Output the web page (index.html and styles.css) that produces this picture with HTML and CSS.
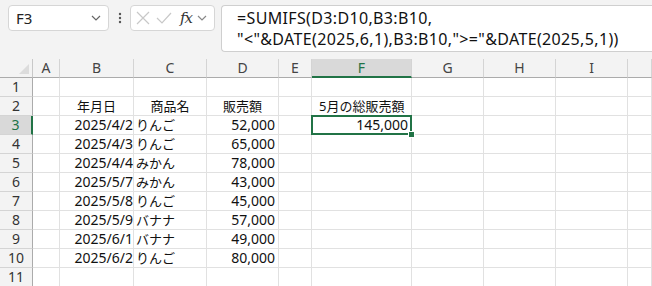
FILE: index.html
```html
<!DOCTYPE html>
<html lang="ja">
<head>
    <meta charset="UTF-8">
    <title>SUMIFS</title>
    <link rel="stylesheet" href="styles.css">
</head>
<body>
    <!-- 数式バー -->
    <div class="formula-area">
        <div class="name-box">
            <span>F3</span>
            <svg class="chev" width="12" height="8" viewBox="0 0 12 8"><path d="M2 2 L6 6 L10 2" fill="none" stroke="#666" stroke-width="1.2"/></svg>
        </div>
        <div class="dots">
            <svg width="4" height="14" viewBox="0 0 4 14"><circle cx="2" cy="3" r="1.2" fill="#555"/><circle cx="2" cy="7" r="1.2" fill="#555"/><circle cx="2" cy="11" r="1.2" fill="#555"/></svg>
        </div>
        <div class="fx-box">
            <svg width="16" height="16" viewBox="0 0 16 16"><path d="M2 2 L14 14 M14 2 L2 14" stroke="#c8c8c8" stroke-width="1.2"/></svg>
            <svg width="18" height="16" viewBox="0 0 18 16"><path d="M2 8 L7 13 L16 3" fill="none" stroke="#c8c8c8" stroke-width="1.2"/></svg>
            <span class="fx">fx</span>
            <svg class="chev" width="12" height="8" viewBox="0 0 12 8"><path d="M2 2 L6 6 L10 2" fill="none" stroke="#888" stroke-width="1.2"/></svg>
        </div>
        <div class="formula">
            <div>=SUMIFS(D3:D10,B3:B10,</div>
            <div>"&lt;"&amp;DATE(2025,6,1),B3:B10,"&gt;="&amp;DATE(2025,5,1))</div>
        </div>
    </div>

    <!-- シート -->
    <div class="sheet">
        <div class="corner"></div>
        <div class="col-head">A</div>
        <div class="col-head">B</div>
        <div class="col-head">C</div>
        <div class="col-head">D</div>
        <div class="col-head">E</div>
        <div class="col-head sel">F</div>
        <div class="col-head">G</div>
        <div class="col-head">H</div>
        <div class="col-head">I</div>
        <div class="col-head"></div>

        <div class="row-head">1</div>
        <div class="cell"></div><div class="cell"></div><div class="cell"></div><div class="cell"></div><div class="cell"></div><div class="cell"></div><div class="cell"></div><div class="cell"></div><div class="cell"></div><div class="cell"></div>

        <div class="row-head">2</div>
        <div class="cell"></div>
        <div class="cell ja center">年月日</div>
        <div class="cell ja center">商品名</div>
        <div class="cell ja center">販売額</div>
        <div class="cell"></div>
        <div class="cell ja label">5月の総販売額</div>
        <div class="cell"></div><div class="cell"></div><div class="cell"></div><div class="cell"></div>

        <div class="row-head sel">3</div>
        <div class="cell"></div>
        <div class="cell date">2025/4/2</div>
        <div class="cell ja">りんご</div>
        <div class="cell num">52,000</div>
        <div class="cell"></div>
        <div class="cell num active">145,000</div>
        <div class="cell"></div><div class="cell"></div><div class="cell"></div><div class="cell"></div>

        <div class="row-head">4</div>
        <div class="cell"></div>
        <div class="cell date">2025/4/3</div>
        <div class="cell ja">りんご</div>
        <div class="cell num">65,000</div>
        <div class="cell"></div><div class="cell"></div><div class="cell"></div><div class="cell"></div><div class="cell"></div><div class="cell"></div>

        <div class="row-head">5</div>
        <div class="cell"></div>
        <div class="cell date">2025/4/4</div>
        <div class="cell ja">みかん</div>
        <div class="cell num">78,000</div>
        <div class="cell"></div><div class="cell"></div><div class="cell"></div><div class="cell"></div><div class="cell"></div><div class="cell"></div>

        <div class="row-head">6</div>
        <div class="cell"></div>
        <div class="cell date">2025/5/7</div>
        <div class="cell ja">みかん</div>
        <div class="cell num">43,000</div>
        <div class="cell"></div><div class="cell"></div><div class="cell"></div><div class="cell"></div><div class="cell"></div><div class="cell"></div>

        <div class="row-head">7</div>
        <div class="cell"></div>
        <div class="cell date">2025/5/8</div>
        <div class="cell ja">りんご</div>
        <div class="cell num">45,000</div>
        <div class="cell"></div><div class="cell"></div><div class="cell"></div><div class="cell"></div><div class="cell"></div><div class="cell"></div>

        <div class="row-head">8</div>
        <div class="cell"></div>
        <div class="cell date">2025/5/9</div>
        <div class="cell ja">バナナ</div>
        <div class="cell num">57,000</div>
        <div class="cell"></div><div class="cell"></div><div class="cell"></div><div class="cell"></div><div class="cell"></div><div class="cell"></div>

        <div class="row-head">9</div>
        <div class="cell"></div>
        <div class="cell date">2025/6/1</div>
        <div class="cell ja">バナナ</div>
        <div class="cell num">49,000</div>
        <div class="cell"></div><div class="cell"></div><div class="cell"></div><div class="cell"></div><div class="cell"></div><div class="cell"></div>

        <div class="row-head">10</div>
        <div class="cell"></div>
        <div class="cell date">2025/6/2</div>
        <div class="cell ja">りんご</div>
        <div class="cell num">80,000</div>
        <div class="cell"></div><div class="cell"></div><div class="cell"></div><div class="cell"></div><div class="cell"></div><div class="cell"></div>

        <div class="row-head">11</div>
        <div class="cell"></div><div class="cell"></div><div class="cell"></div><div class="cell"></div><div class="cell"></div><div class="cell"></div><div class="cell"></div><div class="cell"></div><div class="cell"></div><div class="cell"></div>
    </div>
</body>
</html>
```

FILE: styles.css
```css
body {
    margin: 0;
    background: #f3f3f3;
    font-family: "Noto Sans", "Noto Sans CJK JP", sans-serif;
    color: #111;
    overflow: hidden;
}

/* 数式バー */
.formula-area {
    display: flex;
    align-items: flex-start;
    height: 59px;
    padding: 5px 0 0 8px;
    box-sizing: border-box;
}

.name-box {
    width: 101px;
    height: 26px;
    box-sizing: border-box;
    background: #fff;
    border: 1px solid #d6d6d6;
    border-radius: 4px;
    display: flex;
    align-items: center;
    justify-content: space-between;
    padding: 0 6px 0 7px;
    font-size: 15px;
    color: #222;
}

.dots {
    width: 21px;
    height: 26px;
    display: flex;
    align-items: center;
    justify-content: center;
}

.fx-box {
    width: 85px;
    height: 26px;
    box-sizing: border-box;
    background: #fff;
    border: 1px solid #d6d6d6;
    border-radius: 4px;
    display: flex;
    align-items: center;
    gap: 4px;
    padding: 0 2px 0 4px;
}

.fx {
    font-family: "DejaVu Serif", "Liberation Serif", serif;
    font-style: italic;
    font-size: 15px;
    color: #333;
    margin-left: 3px;
    letter-spacing: -1px;
}

.formula {
    flex: 1;
    margin-left: 6px;
    height: 47px;
    box-sizing: border-box;
    background: #fff;
    border: 1px solid #cfcfcf;
    border-right: none;
    border-radius: 4px 0 0 4px;
    padding: 2px 0 0 15px;
    font-size: 16px;
    letter-spacing: 0.35px;
    line-height: 21px;
    color: #111;
    white-space: nowrap;
}

/* シート */
.sheet {
    display: grid;
    grid-template-columns: 33px 27px 74px 73px 72px 33px 100px 72px 72px 72px 1fr;
    grid-auto-rows: 19px;
    background: #fff;
    font-size: 14px;
}

.sheet > div {
    box-sizing: border-box;
    line-height: 18px;
    white-space: nowrap;
}

.corner {
    background: #f3f3f3;
    border-right: 1px solid #c8c8c8;
    border-bottom: 1px solid #ababab;
    position: relative;
}

.corner::after {
    content: "";
    position: absolute;
    right: 3px;
    bottom: 3px;
    border-style: solid;
    border-width: 0 0 10px 10px;
    border-color: transparent transparent #dcdcdc transparent;
}

.col-head {
    background: #f3f3f3;
    border-right: 1px solid #d4d4d4;
    border-bottom: 1px solid #ababab;
    text-align: center;
    color: #444;
}

.col-head.sel {
    background: #d9d9d9;
    color: #217346;
    border-bottom: 2px solid #217346;
}

.row-head {
    background: #f3f3f3;
    border-right: 1px solid #ababab;
    border-bottom: 1px solid #d4d4d4;
    text-align: center;
    color: #333;
}

.row-head.sel {
    background: #d9d9d9;
    color: #217346;
    border-right: 2px solid #217346;
}

.cell {
    border-right: 1px solid #e1e1e1;
    border-bottom: 1px solid #e1e1e1;
    overflow: visible;
}

.ja {
    font-size: 13px;
    padding-left: 2px;
}

.center {
    text-align: center;
    padding-left: 0;
}

.label {
    padding-left: 7px;
}

.date {
    text-align: right;
    padding-right: 0;
}

.num {
    text-align: right;
    padding-right: 3px;
}

.active {
    position: relative;
}

.active::before {
    content: "";
    position: absolute;
    left: -1px;
    top: -1px;
    right: -1px;
    bottom: -1px;
    border: 2px solid #217346;
}

.active::after {
    content: "";
    position: absolute;
    right: -4px;
    bottom: -4px;
    width: 5px;
    height: 5px;
    background: #217346;
    border: 1px solid #fff;
}
```
